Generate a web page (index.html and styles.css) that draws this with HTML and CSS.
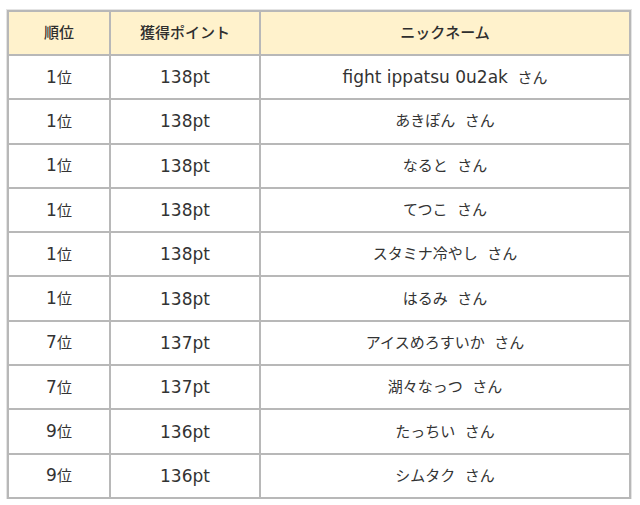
FILE: index.html
```html
<!DOCTYPE html>
<html lang="ja">
<head>
<meta charset="utf-8">
<link rel="stylesheet" href="styles.css">
</head>
<body>
<table class="rank">
  <thead>
    <tr><th class="c-rank">順位</th><th class="c-pt">獲得ポイント</th><th class="c-name">ニックネーム</th></tr>
  </thead>
  <tbody>
    <tr><td><span class="lat">1</span>位</td><td class="lat">138pt</td><td><span class="lat">fight ippatsu 0u2ak</span>&nbsp; さん</td></tr>
    <tr><td><span class="lat">1</span>位</td><td class="lat">138pt</td><td>あきぽん&nbsp; さん</td></tr>
    <tr><td><span class="lat">1</span>位</td><td class="lat">138pt</td><td>なると&nbsp; さん</td></tr>
    <tr><td><span class="lat">1</span>位</td><td class="lat">138pt</td><td>てつこ&nbsp; さん</td></tr>
    <tr><td><span class="lat">1</span>位</td><td class="lat">138pt</td><td>スタミナ冷やし&nbsp; さん</td></tr>
    <tr><td><span class="lat">1</span>位</td><td class="lat">138pt</td><td>はるみ&nbsp; さん</td></tr>
    <tr><td><span class="lat">7</span>位</td><td class="lat">137pt</td><td>アイスめろすいか&nbsp; さん</td></tr>
    <tr><td><span class="lat">7</span>位</td><td class="lat">137pt</td><td>湖々なっつ&nbsp; さん</td></tr>
    <tr><td><span class="lat">9</span>位</td><td class="lat">136pt</td><td>たっちい&nbsp; さん</td></tr>
    <tr><td><span class="lat">9</span>位</td><td class="lat">136pt</td><td>シムタク&nbsp; さん</td></tr>
  </tbody>
</table>
</body>
</html>
```
FILE: styles.css
```css
html, body {
  margin: 0;
  padding: 0;
  background: #ffffff;
}
body {
  padding: 10px 0 0 7px;
  font-family: "DejaVu Sans", "Noto Sans CJK JP", sans-serif;
  font-size: 15px;
  color: #333333;
}
.rank {
  width: 624px;
  border-collapse: collapse;
  border: 2px solid #b8b8b8;
  box-shadow: 0 0 0 1px #e4e4e4;
}
.rank th, .rank td {
  border: 2px solid #b8b8b8;
  text-align: center;
  vertical-align: middle;
  padding: 0;
  line-height: 20px;
}
.rank th {
  height: 42px;
  background: #fff2cc;
  font-weight: 500;
  color: #2e2e2e;
}
.rank td {
  height: 42.3px;
}
.lat {
  font-size: 17px;
}
.c-rank { width: 100px; }
.c-pt { width: 148px; }
```
